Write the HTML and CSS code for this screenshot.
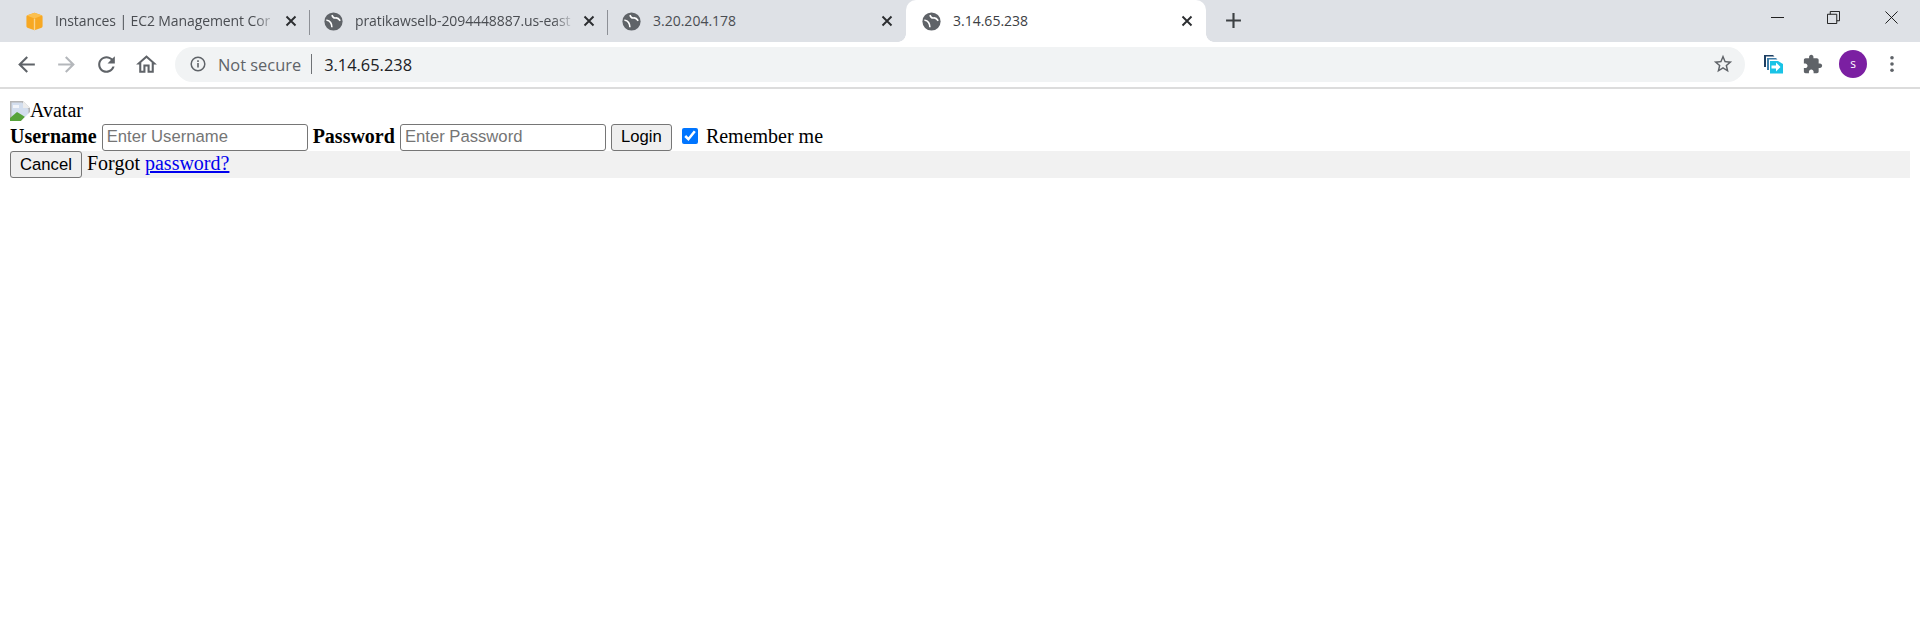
FILE: index.html
```html
<!DOCTYPE html>
<html lang="en">
<head>
    <meta charset="UTF-8">
    <meta name="viewport" content="width=device-width, initial-scale=1.0">
    <title>3.14.65.238</title>
    <link rel="stylesheet" href="styles.css">
</head>
<body>

    <svg class="icon-defs" width="0" height="0">
        <symbol id="globe" viewBox="0 0 24 24">
            <circle cx="12" cy="12" r="11.500" fill="#5f6368"/>
            <path d="M3 10.500c2.500-.3 4 .8 5.300 2.700 1.200 1.800 1.700 3.700 1.700 6" fill="none" stroke="#fff" stroke-width="2"/>
            <path d="M10 4c1 2.500 2.500 4 4.500 3.500S18.500 8 20.500 11" fill="none" stroke="#fff" stroke-width="2"/>
        </symbol>
        <symbol id="close" viewBox="0 0 12 12"><path d="M1.500 1.500l9 9M10.500 1.500l-9 9" fill="none" stroke="currentColor" stroke-width="1.900"/></symbol>
    </svg>

    <div id="tabstrip">
        <div class="tab tab-first">
            <svg class="tab-icon" viewBox="0 0 20 20">
                <path d="M10 .8l7.500 2.700c.7.300 1 .8 1 1.500v10c0 .7-.3 1.200-1 1.500L10 19.200 2.500 16.500c-.7-.3-1-.8-1-1.500V5c0-.7.3-1.200 1-1.500z" fill="#f7a823"/>
                <path d="M10 .8l8 3-8 3-8-3z" fill="#fbc04f"/>
                <path d="M9.300 7h1.400v12H9.300z" fill="#fbd48c"/>
            </svg>
            <span class="tab-title">Instances | EC2 Management Cor</span>
            <svg class="tab-close"><use href="#close"/></svg>
        </div>
        <div class="tab">
            <svg class="tab-icon"><use href="#globe"/></svg>
            <span class="tab-title">pratikawselb-2094448887.us-east</span>
            <svg class="tab-close"><use href="#close"/></svg>
        </div>
        <div class="tab tab-last">
            <svg class="tab-icon"><use href="#globe"/></svg>
            <span class="tab-title">3.20.204.178</span>
            <svg class="tab-close"><use href="#close"/></svg>
        </div>
        <div class="tab tab-active">
            <svg class="tab-icon"><use href="#globe"/></svg>
            <span class="tab-title">3.14.65.238</span>
            <svg class="tab-close"><use href="#close"/></svg>
        </div>
        <svg class="new-tab" viewBox="0 0 16 16"><path d="M8 1v14M1 8h14" fill="none" stroke="#3c4043" stroke-width="2"/></svg>

        <div id="window-controls">
            <svg class="win-btn" viewBox="0 0 14 14"><path d="M0 7h14" fill="none" stroke="#111" stroke-width="1"/></svg>
            <svg class="win-btn" viewBox="0 0 14 14"><path d="M.5 3.500h10v10H.5zM3.500 3.500v-3h10v10h-3" fill="none" stroke="#111" stroke-width="1"/></svg>
            <svg class="win-btn win-close" viewBox="0 0 14 14"><path d="M.5.500l13 13M13.500.500l-13 13" fill="none" stroke="#111" stroke-width="1"/></svg>
        </div>
    </div>

    <div id="toolbar">
        <div class="nav-buttons">
            <svg class="nav-icon" viewBox="0 0 24 24"><path d="M20 11H7.830l5.590-5.590L12 4l-8 8 8 8 1.410-1.410L7.830 13H20v-2z" fill="#5f6368"/></svg>
            <svg class="nav-icon" viewBox="0 0 24 24"><path d="M4 11h12.170l-5.590-5.590L12 4l8 8-8 8-1.410-1.410L16.170 13H4v-2z" fill="#b4b7bb"/></svg>
            <svg class="nav-icon" viewBox="0 0 24 24"><path d="M17.650 6.350C16.200 4.900 14.210 4 12 4c-4.420 0-7.990 3.580-7.990 8s3.570 8 7.990 8c3.730 0 6.840-2.550 7.730-6h-2.080c-.82 2.330-3.040 4-5.650 4-3.310 0-6-2.690-6-6s2.690-6 6-6c1.660 0 3.140.69 4.220 1.780L13 11h7V4l-2.350 2.350z" fill="#5f6368"/></svg>
            <svg class="nav-icon" viewBox="0 0 24 24"><path d="M12 5.690l5 4.500V18h-2v-6H9v6H7v-7.810l5-4.500M12 3L2 12h3v8h6v-6h2v6h6v-8h3L12 3z" fill="#5f6368"/></svg>
        </div>

        <div id="omnibox">
            <svg class="info-icon" viewBox="0 0 16 16">
                <circle cx="8" cy="8" r="6.800" fill="none" stroke="#5f6368" stroke-width="1.500"/>
                <path d="M7.200 7h1.600v4.500H7.200zM7.200 4.300h1.600v1.600H7.200z" fill="#5f6368"/>
            </svg>
            <span class="not-secure">Not secure</span>
            <span class="omni-sep"></span>
            <span class="omni-url">3.14.65.238</span>
            <svg class="star-icon" viewBox="0 0 24 24"><path d="M22 9.240l-7.190-.620L12 2 9.190 8.630 2 9.240l5.460 4.730L5.820 21 12 17.270 18.180 21l-1.630-7.030L22 9.240zM12 15.400l-3.760 2.270 1-4.280-3.320-2.880 4.380-.380L12 6.100l1.710 4.040 4.380.380-3.320 2.880 1 4.280L12 15.400z" fill="#5f6368"/></svg>
        </div>

        <div class="ext-buttons">
            <svg class="ext-icon" viewBox="0 0 20 20">
                <path d="M1 1h9l1.500 1.500H3V13H1z" fill="#1d3f63"/>
                <path d="M4 4h9l1.500 1.500H6V16H4z" fill="#3d7da8"/>
                <path d="M7 7h8l5 3v9.500H7z" fill="#19c3e6"/>
                <path d="M8.500 11.500h4.500V8.500l4.500 4.500-4.500 4.500v-3H8.500z" fill="#fff"/>
            </svg>
            <svg class="ext-icon" viewBox="1 0 23 23"><path d="M20.500 11H19V7c0-1.100-.9-2-2-2h-4V3.500C13 2.120 11.880 1 10.500 1S8 2.120 8 3.500V5H4c-1.100 0-1.990.9-1.990 2v3.800H3.500c1.490 0 2.700 1.210 2.700 2.700s-1.210 2.700-2.700 2.700H2V20c0 1.100.9 2 2 2h3.800v-1.500c0-1.490 1.210-2.700 2.700-2.700 1.490 0 2.700 1.210 2.700 2.700V22H17c1.100 0 2-.9 2-2v-4h1.500c1.380 0 2.500-1.120 2.500-2.500S21.880 11 20.500 11z" fill="#5f6368"/></svg>
            <div class="profile">s</div>
            <svg class="menu-icon" viewBox="0 0 6 20"><circle cx="3" cy="3" r="2" fill="#5f6368"/><circle cx="3" cy="10" r="2" fill="#5f6368"/><circle cx="3" cy="17" r="2" fill="#5f6368"/></svg>
        </div>
    </div>

    <div id="page">
        <div class="avatar-row">
            <svg class="broken-img" viewBox="0 0 20 20">
                <path d="M0 0h13l7 7v13H0z" fill="#b5b5b5"/>
                <path d="M1.500 1.500h10.500l6.500 6.500v10.500h-17z" fill="#d3deee"/>
                <path d="M0 20v-3l7-6 5 3 3 2-4 4z" fill="#57a33a"/>
                <path d="M3 4h6v3H3z" fill="#f2f5fa"/>
                <path d="M13 0v7h7z" fill="#ececec"/>
                <path d="M11 20l9-9v9z" fill="#fff"/>
            </svg>
            <span class="page-text">Avatar</span>
        </div>

        <form class="login-row" onsubmit="return false">
            <label class="page-text" for="uname">Username</label>
            <input type="text" id="uname" class="text-input" placeholder="Enter Username">
            <label class="page-text" for="psw">Password</label>
            <input type="password" id="psw" class="text-input" placeholder="Enter Password">
            <button class="btn btn-login">Login</button>
            <input type="checkbox" id="remember" class="remember-check" checked>
            <span class="page-text">Remember me</span>
        </form>

        <div class="footer-row">
            <button class="btn btn-cancel">Cancel</button>
            <span class="page-text">Forgot <a href="#">password?</a></span>
        </div>
    </div>

</body>
</html>
```

FILE: styles.css
```css
html, body {
    margin: 0;
    height: 100%;
    overflow: hidden;
    background: #fff;
}

.icon-defs {
    display: block;
    height: 0;
}

#tabstrip {
    display: flex;
    align-items: stretch;
    height: 42px;
    background: #dee1e6;
    font-family: 'Open Sans', sans-serif;
    font-size: 14px;
    color: #4a4d52;
}

.tab {
    position: relative;
    display: flex;
    align-items: center;
    width: 298px;
    box-sizing: border-box;
    padding: 0 12px 0 14px;
}

.tab-first {
    width: 310px;
    padding-left: 25px;
}

.tab-first .tab-icon {
    margin-right: 11px;
}

.tab-last {
    width: 298px;
}

.tab::after {
    content: "";
    position: absolute;
    right: 0;
    top: 10px;
    height: 25px;
    width: 1px;
    background: #8d9096;
}

.tab-last::after {
    display: none;
}

.tab-active {
    width: 300px;
    padding: 0 12px 0 16px;
    background: #fff;
    border-radius: 10px 10px 0 0;
    color: #3c4043;
}

.tab-active::before,
.tab-active::after {
    content: "";
    display: block;
    position: absolute;
    top: auto;
    bottom: 0;
    width: 8px;
    height: 8px;
}

.tab-active::before {
    left: -8px;
    background: radial-gradient(circle at 0 0, transparent 7.5px, #fff 8px);
}

.tab-active::after {
    right: -8px;
    background: radial-gradient(circle at 100% 0, transparent 7.5px, #fff 8px);
}

.tab-icon {
    flex: none;
    width: 19px;
    height: 19px;
    margin-right: 12px;
}

.tab-title {
    flex: 1;
    min-width: 0;
    margin-top: -1px;
    letter-spacing: -0.1px;
    white-space: nowrap;
    overflow: hidden;
    -webkit-mask-image: linear-gradient(to right, #000 90%, transparent 100%);
    mask-image: linear-gradient(to right, #000 90%, transparent 100%);
}

.tab-last .tab-title,
.tab-active .tab-title {
    letter-spacing: 0;
    -webkit-mask-image: none;
    mask-image: none;
}

.tab-close {
    flex: none;
    width: 12px;
    height: 12px;
    margin: 0 1px 0 8px;
    color: #2b2d30;
}

.new-tab {
    width: 17px;
    height: 17px;
    margin: 12px 0 0 19px;
}

#window-controls {
    display: flex;
    align-items: flex-start;
    gap: 43px;
    margin-left: auto;
    padding: 11px 22px 0 0;
}

.win-btn {
    width: 13px;
    height: 13px;
}

.win-close {
    margin-left: 2px;
}

#toolbar {
    display: flex;
    align-items: center;
    height: 44px;
    padding-bottom: 1px;
    background: #fff;
    border-bottom: 2px solid #dcdcdc;
    font-family: 'Open Sans', sans-serif;
}

.nav-buttons {
    display: flex;
    align-items: center;
    gap: 15px;
    padding-left: 14px;
    margin-right: 16px;
}

.nav-icon {
    width: 25px;
    height: 25px;
}

#omnibox {
    display: flex;
    align-items: center;
    width: 1570px;
    height: 35px;
    box-sizing: border-box;
    padding: 0 11px 0 15px;
    background: #f1f3f4;
    border-radius: 18px;
    font-size: 16.4px;
}

.info-icon {
    width: 16px;
    height: 16px;
    margin-right: 12px;
}

.not-secure {
    color: #5f6368;
}

.omni-sep {
    width: 1px;
    height: 20px;
    margin: 0 12px 0 10px;
    background: #6f7276;
}

.omni-url {
    color: #202124;
}

.star-icon {
    width: 22px;
    height: 22px;
    margin-left: auto;
}

.ext-buttons {
    display: flex;
    align-items: center;
    padding-left: 18px;
}

.ext-icon {
    width: 20px;
    height: 20px;
    margin-right: 20px;
}

.profile {
    width: 28px;
    height: 28px;
    border-radius: 50%;
    background: #7b1fa2;
    color: #fff;
    font-size: 12px;
    line-height: 27px;
    text-align: center;
    margin-left: -4px;
}

.menu-icon {
    width: 6px;
    height: 18px;
    margin-left: 22px;
}

#page {
    padding: 10px 10px 0;
    font-family: 'Liberation Serif', serif;
    font-size: 20px;
    color: #000;
}

.page-text {
    padding-bottom: 2px;
}

.avatar-row {
    display: flex;
    align-items: center;
    height: 24px;
}

.broken-img {
    width: 20px;
    height: 20px;
}

.login-row {
    display: flex;
    align-items: center;
    height: 28px;
}

.login-row label {
    font-weight: bold;
}

.text-input {
    width: 206px;
    height: 27px;
    box-sizing: border-box;
    margin: 0 5px;
    padding: 1px 4px;
    border: 1px solid #767676;
    border-radius: 3px;
    background: #fff;
    font-family: 'Liberation Sans', sans-serif;
    font-size: 16.67px;
}

.text-input::placeholder {
    color: #757575;
    opacity: 1;
}

.btn {
    height: 27px;
    box-sizing: border-box;
    padding: 0;
    border: 1px solid #767676;
    border-radius: 3px;
    background: #efefef;
    color: #000;
    font-family: 'Liberation Sans', sans-serif;
    font-size: 16.67px;
}

.btn-login {
    width: 61px;
}

.remember-check {
    width: 16px;
    height: 16px;
    margin: -2px 8px 0 10px;
    accent-color: #0075ff;
}

.footer-row {
    display: flex;
    align-items: center;
    gap: 5px;
    height: 27px;
    background: #f1f1f1;
}

.btn-cancel {
    width: 72px;
}

#page a {
    color: #0000ee;
}
```
